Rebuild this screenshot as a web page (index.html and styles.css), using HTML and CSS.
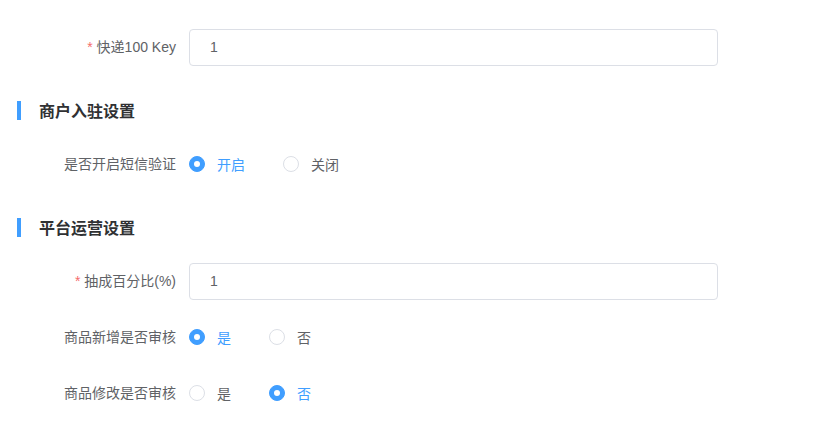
FILE: index.html
```html
<!DOCTYPE html>
<html lang="zh-CN">
<head>
  <meta charset="UTF-8" />
  <title>系统设置</title>
  <link rel="stylesheet" href="styles.css">
</head>
<body>
  <form class="setting-form">
    <div class="form-item">
      <label class="form-label"><span class="required">*</span> 快递100 Key</label>
      <div class="form-content">
        <input class="text-input" type="text" value="1">
      </div>
    </div>

    <h3 class="section-title">商户入驻设置</h3>

    <div class="form-item">
      <label class="form-label">是否开启短信验证</label>
      <div class="form-content">
        <label class="radio checked"><span class="radio-dot"></span><span class="radio-text">开启</span></label>
        <label class="radio"><span class="radio-dot"></span><span class="radio-text">关闭</span></label>
      </div>
    </div>

    <h3 class="section-title">平台运营设置</h3>

    <div class="form-item">
      <label class="form-label"><span class="required">*</span> 抽成百分比(%)</label>
      <div class="form-content">
        <input class="text-input" type="text" value="1">
      </div>
    </div>

    <div class="form-item">
      <label class="form-label">商品新增是否审核</label>
      <div class="form-content">
        <label class="radio checked"><span class="radio-dot"></span><span class="radio-text">是</span></label>
        <label class="radio"><span class="radio-dot"></span><span class="radio-text">否</span></label>
      </div>
    </div>

    <div class="form-item">
      <label class="form-label">商品修改是否审核</label>
      <div class="form-content">
        <label class="radio"><span class="radio-dot"></span><span class="radio-text">是</span></label>
        <label class="radio checked"><span class="radio-dot"></span><span class="radio-text">否</span></label>
      </div>
    </div>
  </form>
</body>
</html>
```

FILE: styles.css
```css
body {
  margin: 0;
  background-color: #fff;
  font-family: "Liberation Sans", "Noto Sans CJK SC", sans-serif;
  font-size: 14px;
  color: #606266;
}
.setting-form {
  padding-top: 29px;
}
.form-item {
  display: flex;
  align-items: center;
  height: 36px;
  margin-bottom: 20px;
}
.form-label {
  flex: none;
  width: 176px;
  padding-right: 13px;
  text-align: right;
  line-height: 36px;
  white-space: nowrap;
}
.required {
  color: #f56c6c;
}
.form-content {
  display: flex;
  align-items: center;
}
.text-input {
  width: 529px;
  height: 37px;
  box-sizing: border-box;
  border: 1px solid #dcdfe6;
  border-radius: 4px;
  padding: 0 20px;
  font-family: inherit;
  font-size: 14px;
  color: #606266;
  outline: none;
}
.section-title {
  display: flex;
  align-items: center;
  margin: 35px 0 26px 17px;
  height: 20px;
  font-size: 16px;
  font-weight: bold;
  color: #303133;
}
.section-title::before {
  content: "";
  flex: none;
  width: 4px;
  height: 19px;
  margin-right: 18px;
  background-color: #409eff;
}
.radio {
  display: flex;
  align-items: center;
  margin-right: 38px;
  cursor: pointer;
}
.radio-dot {
  flex: none;
  display: block;
  width: 16px;
  height: 16px;
  box-sizing: border-box;
  border: 1px solid #dcdfe6;
  border-radius: 50%;
  background-color: #fff;
  position: relative;
}
.radio-text {
  padding-left: 12px;
}
.radio.checked .radio-dot {
  border-color: #409eff;
  background-color: #409eff;
}
.radio.checked .radio-dot::after {
  content: "";
  position: absolute;
  left: 4px;
  top: 4px;
  width: 6px;
  height: 6px;
  border-radius: 50%;
  background-color: #fff;
}
.radio.checked .radio-text {
  color: #409eff;
}
```
